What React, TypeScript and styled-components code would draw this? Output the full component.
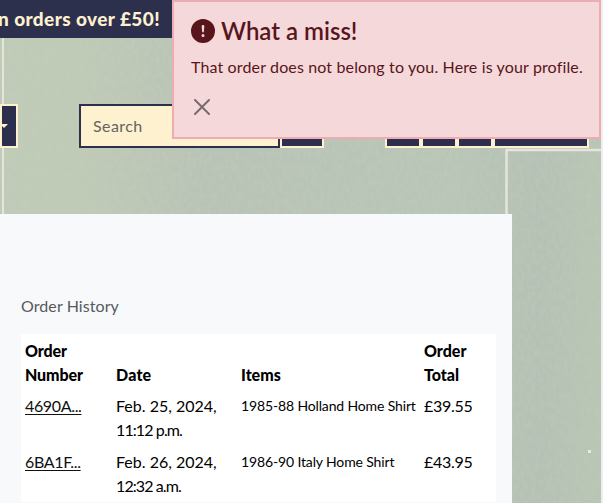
import React from 'react';
import styled, { createGlobalStyle } from 'styled-components';

const navy = '#2d304d';
const cream = '#fdf1d0';

const GlobalStyle = createGlobalStyle`
  * { box-sizing: border-box; }
  body {
    margin: 0;
    overflow: hidden;
    background: #eeeeee;
    font-family: Lato, "Open Sans", sans-serif;
    font-size: 16px;
    line-height: 24px;
    color: #000;
  }
`;

const Page = styled.div`
  position: relative;
  width: 601px;
  height: 503px;
  overflow: hidden;
  background: #bac5b6;
`;

const Backdrop = styled.svg`
  position: absolute;
  inset: 0;
`;

const Content = styled.div`
  position: relative;
`;

const Banner = styled.div`
  display: flex;
  justify-content: flex-end;
  height: 38px;
  padding-right: 441px;
  background: ${navy};
  color: ${cream};
  white-space: nowrap;
  line-height: 38px;
`;

const Label = styled.span<{ $size?: number; $spacing?: number; $weight?: number }>`
  font-size: ${(p) => p.$size ?? 16}px;
  letter-spacing: ${(p) => p.$spacing ?? 0}px;
  font-weight: ${(p) => p.$weight ?? 400};
  white-space: nowrap;
`;

const Nav = styled.nav`
  display: flex;
  height: 44px;
  margin: 66px 0;
`;

const NavButton = styled.button<{ $width: number }>`
  display: flex;
  align-items: center;
  justify-content: flex-end;
  flex: none;
  width: ${(p) => p.$width}px;
  padding: 0 8px 0 0;
  border: 2px solid ${cream};
  border-radius: 0;
  background: ${navy};
  svg { flex: none; }
`;

const Search = styled.form`
  display: flex;
  margin: 0 61px;
`;

const SearchInput = styled.input`
  width: 201px;
  padding: 0 12px 2px;
  border: 2px solid ${navy};
  border-radius: 0;
  background: ${cream};
  font: 16px Lato, sans-serif;
  letter-spacing: 0.4px;
  &::placeholder { color: #66645d; opacity: 1; }
`;

const Main = styled.main`
  width: 512px;
  height: 289px;
  padding: 80px 16px 0 21px;
  background: #f8f9fb;
`;

const Heading = styled.p`
  margin: 0 0 16px;
  color: #55595d;
`;

const Orders = styled.table`
  width: 475px;
  table-layout: fixed;
  border-collapse: collapse;
  background: #fff;
  th, td { padding: 4px 0 4px 4px; text-align: left; vertical-align: top; }
  th { padding-top: 5px; padding-bottom: 3px; vertical-align: bottom; }
`;

const Col = styled.col<{ $width: number }>`
  width: ${(p) => p.$width}px;
`;

const OrderLink = styled.a`
  color: #111;
  text-decoration: underline;
  text-underline-offset: 2px;
`;

const ItemCell = styled.td`
  && { padding-top: 3px; }
`;

const Toast = styled.section`
  position: absolute;
  top: 0;
  right: 0;
  width: 429px;
  height: 139px;
  padding: 14px 17px;
  border: 2px solid #eeabb3;
  background: #f5d8da;
  color: #58151c;
`;

const ToastTitle = styled.h4`
  display: flex;
  align-items: center;
  gap: 6px;
  height: 30px;
  margin: 0 0 9px;
  line-height: 32px;
`;

const ToastText = styled.p`
  margin: 0 0 17px;
`;

const Close = styled.button`
  display: block;
  padding: 3px;
  border: 0;
  background: none;
  svg { display: block; }
`;

const orders = [
  { id: '4690A...', day: 'Feb. 25, 2024,', time: '11:12 p.m.', item: '1985-88 Holland Home Shirt', total: '£39.55' },
  { id: '6BA1F...', day: 'Feb. 26, 2024,', time: '12:32 a.m.', item: '1986-90 Italy Home Shirt', total: '£43.95' },
];

function Pitch() {
  return (
    <Backdrop width="601" height="503" aria-hidden="true">
      <defs>
        <linearGradient id="grass" x1="0" y1="0" x2="1" y2="0">
          <stop offset="0" stopColor="#bfcab8" />
          <stop offset="0.12" stopColor="#bfcab7" />
          <stop offset="0.34" stopColor="#b8c3b7" />
          <stop offset="0.75" stopColor="#b9c5b7" />
          <stop offset="0.9" stopColor="#b5c1b5" />
          <stop offset="1" stopColor="#b9c5b5" />
        </linearGradient>
        <filter id="weave" x="0" y="0" width="100%" height="100%" colorInterpolationFilters="sRGB">
          <feTurbulence type="fractalNoise" baseFrequency="0.25 0.14" numOctaves="3" seed="7" />
          <feColorMatrix values="0 0 0 0 0.83  0 0 0 0 0.88  0 0 0 0 0.72  1 0 0 0 -0.35" />
        </filter>
      </defs>
      <rect width="601" height="503" fill="url(#grass)" />
      <rect width="601" height="503" filter="url(#weave)" opacity="0.3" />
      <g fill="none" stroke="#e5e5db">
        <path d="M3 38V214" strokeWidth="2" />
        <path d="M506.5 214V150H601" strokeWidth="2.5" />
      </g>
      <rect x="588" y="450" width="3" height="3" fill="#e7eadc" />
    </Backdrop>
  );
}

export default function App() {
  return (
    <>
      <GlobalStyle />
      <Page>
        <Pitch />
        <Content>
          <Banner><Label $size={19} $spacing={0.4} $weight={900}>n orders over £50!</Label></Banner>
          <Nav>
            <NavButton $width={18} aria-label="Categories">
              <svg width="8" height="4" viewBox="0 0 8 4"><path d="M0 0H8L4 4Z" fill={cream} /></svg>
            </NavButton>
            <Search>
              <SearchInput placeholder="Search" />
              <NavButton $width={44} type="button" aria-label="Search" />
            </Search>
            <NavButton $width={36} />
            <NavButton $width={36} />
            <NavButton $width={36} />
            <NavButton $width={96} />
          </Nav>
          <Main>
            <Heading><Label $spacing={0.08}>Order History</Label></Heading>
            <Orders>
              <colgroup>
                <Col $width={91} /><Col $width={125} /><Col $width={183} /><Col $width={76} />
              </colgroup>
              <thead>
                <tr>
                  <th><Label $weight={900} $spacing={-0.1}>Order<br />Number</Label></th>
                  <th><Label $weight={900} $spacing={0.2}>Date</Label></th>
                  <th><Label $weight={900} $spacing={0}>Items</Label></th>
                  <th><Label $weight={900} $spacing={0}>Order<br />Total</Label></th>
                </tr>
              </thead>
              <tbody>
                {orders.map((o) => (
                  <tr key={o.id}>
                    <td><OrderLink><Label $spacing={-0.35}>{o.id}</Label></OrderLink></td>
                    <td><Label>{o.day}</Label><br /><Label $spacing={-0.9}>{o.time}</Label></td>
                    <ItemCell><Label $size={14} $spacing={-0.14}>{o.item}</Label></ItemCell>
                    <td><Label $spacing={-0.3}>{o.total}</Label></td>
                  </tr>
                ))}
              </tbody>
            </Orders>
          </Main>
        </Content>
        <Toast role="alert">
          <ToastTitle>
            <svg width="24" height="24" viewBox="0 0 16 16" fill="currentColor">
              <path d="M16 8A8 8 0 1 1 0 8a8 8 0 0 1 16 0M8 4a.905.905 0 0 0-.9.995l.35 3.507a.552.552 0 0 0 1.1 0l.35-3.507A.905.905 0 0 0 8 4m.002 6a1 1 0 1 0 0 2 1 1 0 0 0 0-2" />
            </svg>
            <Label $size={24} $weight={600}>What a miss!</Label>
          </ToastTitle>
          <ToastText><Label $spacing={0.14}>That order does not belong to you. Here is your profile.</Label></ToastText>
          <Close aria-label="Close">
            <svg width="16" height="16" viewBox="0 0 16 16" fill="none" stroke="#7a6c6d" strokeWidth="2" strokeLinecap="round">
              <path d="M1 1L15 15M15 1L1 15" />
            </svg>
          </Close>
        </Toast>
      </Page>
    </>
  );
}
